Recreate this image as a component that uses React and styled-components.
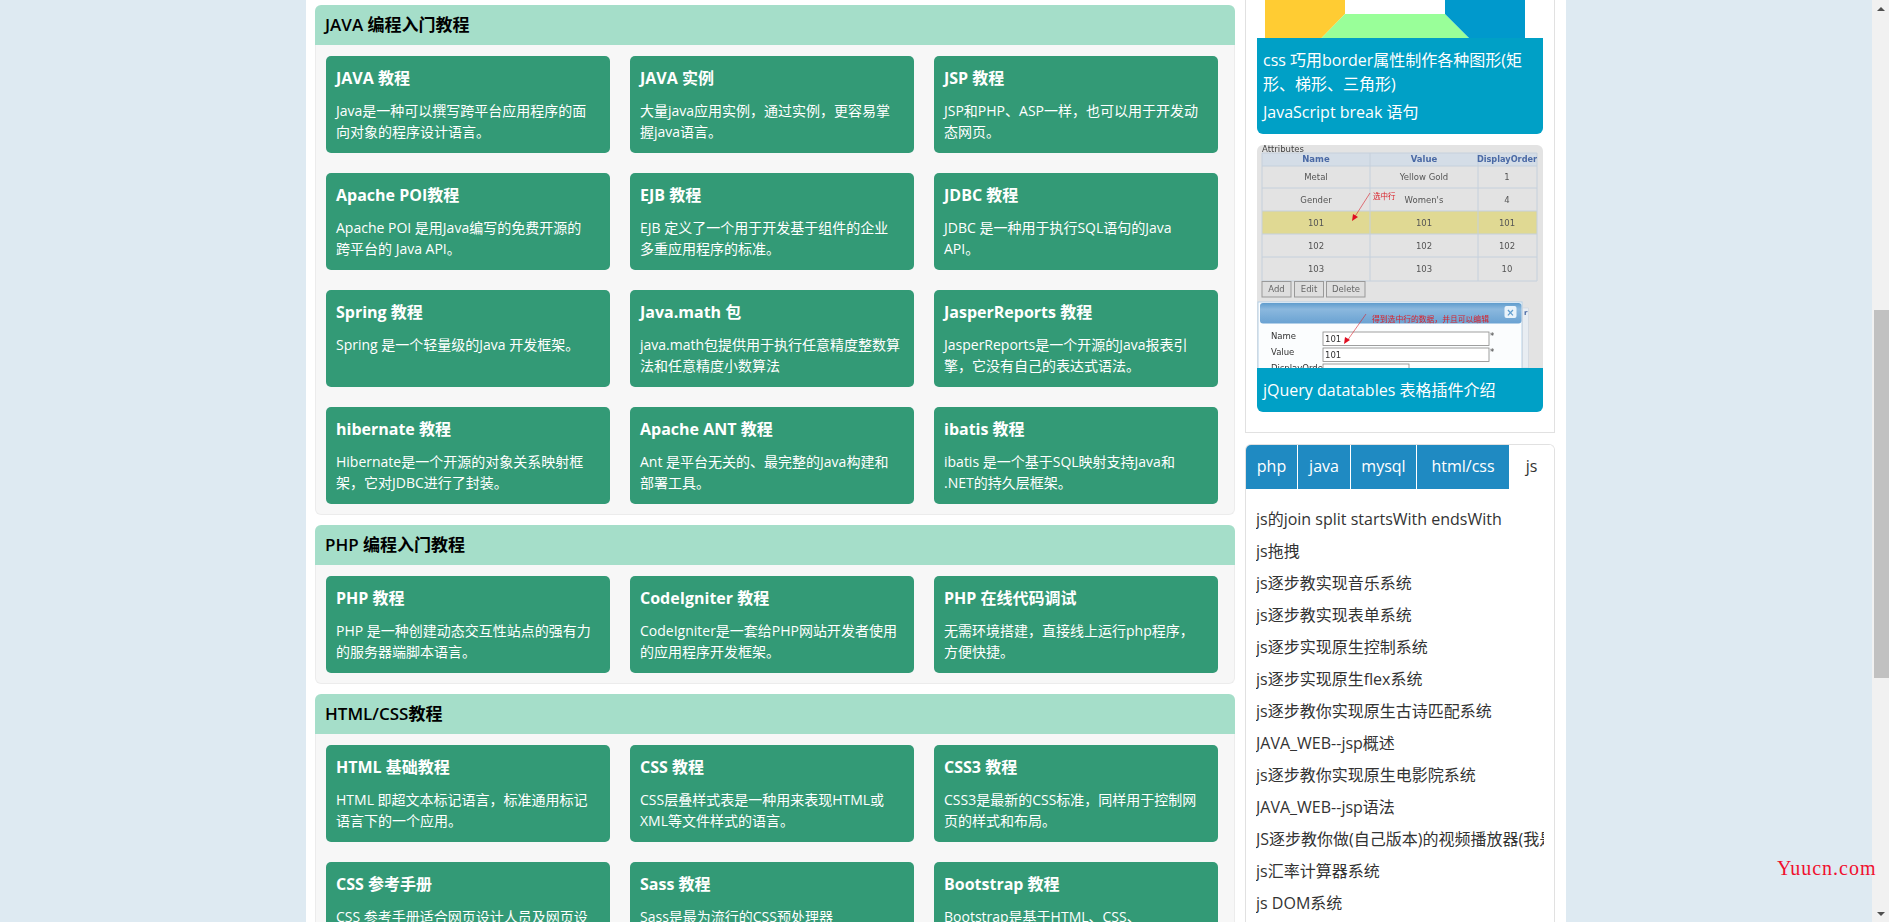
// App.jsx
import styled, { createGlobalStyle } from "styled-components";

const FONT = `"Open Sans", "Noto Sans CJK SC", sans-serif`;

// line breaks in the descriptions follow the original page
const sections = [
  {
    title: "JAVA 编程入门教程",
    cards: [
      ["JAVA 教程", "Java是一种可以撰写跨平台应用程序的面\n向对象的程序设计语言。"],
      ["JAVA 实例", "大量java应用实例，通过实例，更容易掌\n握java语言。"],
      ["JSP 教程", "JSP和PHP、ASP一样，也可以用于开发动\n态网页。"],
      ["Apache POI教程", "Apache POI 是用Java编写的免费开源的\n跨平台的 Java API。"],
      ["EJB 教程", "EJB 定义了一个用于开发基于组件的企业\n多重应用程序的标准。"],
      ["JDBC 教程", "JDBC 是一种用于执行SQL语句的Java\nAPI。"],
      ["Spring 教程", "Spring 是一个轻量级的Java 开发框架。"],
      ["Java.math 包", "java.math包提供用于执行任意精度整数算\n法和任意精度小数算法"],
      ["JasperReports 教程", "JasperReports是一个开源的Java报表引\n擎，它没有自己的表达式语法。"],
      ["hibernate 教程", "Hibernate是一个开源的对象关系映射框\n架，它对JDBC进行了封装。"],
      ["Apache ANT 教程", "Ant 是平台无关的、最完整的Java构建和\n部署工具。"],
      ["ibatis 教程", "ibatis 是一个基于SQL映射支持Java和\n.NET的持久层框架。"],
    ],
  },
  {
    title: "PHP 编程入门教程",
    cards: [
      ["PHP 教程", "PHP 是一种创建动态交互性站点的强有力\n的服务器端脚本语言。"],
      ["CodeIgniter 教程", "CodeIgniter是一套给PHP网站开发者使用\n的应用程序开发框架。"],
      ["PHP 在线代码调试", "无需环境搭建，直接线上运行php程序，\n方便快捷。"],
    ],
  },
  {
    title: "HTML/CSS教程",
    cards: [
      ["HTML 基础教程", "HTML 即超文本标记语言，标准通用标记\n语言下的一个应用。"],
      ["CSS 教程", "CSS层叠样式表是一种用来表现HTML或\nXML等文件样式的语言。"],
      ["CSS3 教程", "CSS3是最新的CSS标准，同样用于控制网\n页的样式和布局。"],
      ["CSS 参考手册", "CSS 参考手册适合网页设计人员及网页设\n计爱好者使用。"],
      ["Sass 教程", "Sass是最为流行的CSS预处理器"],
      ["Bootstrap 教程", "Bootstrap是基于HTML、CSS、\nJavaScript的前端框架。"],
    ],
  },
];

const tabs = [
  { label: "php", width: 52 },
  { label: "java", width: 53 },
  { label: "mysql", width: 66 },
  { label: "html/css", width: 92 },
  { label: "js", width: 45, active: true },
];

const jsLinks = [
  "js的join split startsWith endsWith",
  "js拖拽",
  "js逐步教实现音乐系统",
  "js逐步教实现表单系统",
  "js逐步实现原生控制系统",
  "js逐步实现原生flex系统",
  "js逐步教你实现原生古诗匹配系统",
  "JAVA_WEB--jsp概述",
  "js逐步教你实现原生电影院系统",
  "JAVA_WEB--jsp语法",
  "JS逐步教你做(自己版本)的视频播放器(我是菜鸟系列)",
  "js汇率计算器系统",
  "js DOM系统",
];

const GlobalStyle = createGlobalStyle`
  html, body {
    margin: 0;
    height: 100%;
    overflow: hidden;
    font-family: ${FONT};
  }
`;

const Page = styled.div`
  display: flex;
  height: 100vh;
  background: #deeaf2;
  position: relative;
`;

const Viewport = styled.div`
  flex: 1;
  overflow: hidden;
`;

const Wrapper = styled.div`
  width: 1260px;
  height: 100%;
  box-sizing: border-box;
  margin: 0 auto;
  background: #fff;
  padding-left: 9px;
  display: flex;
  gap: 10px;
`;

const Main = styled.main`
  width: 920px;
  flex: none;
  padding-top: 5px;
  display: flex;
  flex-direction: column;
  gap: 10px;
`;

const SectionHead = styled.h2`
  margin: 0;
  height: 40px;
  line-height: 40px;
  padding-left: 10px;
  font-size: 17px;
  font-weight: 600;
  color: #000;
  background: #a5dec9;
  border-radius: 6px 6px 0 0;
`;

const SectionBody = styled.div`
  display: grid;
  grid-template-columns: repeat(3, 284px);
  gap: 20px;
  padding: 11px 10px 10px;
  background: #f7f7f7;
  border: 1px solid #ececec;
  border-top: 0;
  border-radius: 0 0 6px 6px;
`;

const Card = styled.a`
  display: block;
  height: 97px;
  box-sizing: border-box;
  padding: 10px;
  background: #339a76;
  border-radius: 5px;
  color: #fff;
`;

const CardTitle = styled.h4`
  margin: 0 0 10px;
  font-size: 16px;
  line-height: 24px;
  font-weight: 700;
`;

const CardText = styled.p`
  margin: 0;
  font-size: 14px;
  line-height: 21px;
  white-space: pre;
`;

const Sidebar = styled.aside`
  width: 310px;
  flex: none;
  display: flex;
  flex-direction: column;
  gap: 11px;
`;

const PicturePanel = styled.div`
  height: 433px;
  box-sizing: border-box;
  border: 1px solid #e1e1e1;
  border-top: 0;
  padding: 0 11px;
  display: flex;
  flex-direction: column;
  gap: 11px;
`;

const PictureCard = styled.div`
  overflow: hidden;
  border-radius: ${({ $open }) => ($open ? "0 0 6px 6px" : "6px")};
`;

const Picture = styled.svg`
  display: block;
  width: 286px;
`;

const Caption = styled.div`
  background: #00a0c6;
  padding: 10px 6px;
  display: flex;
  flex-direction: column;
  gap: 4px;
  color: #fff;
  font-size: 16px;
  line-height: 24px;
`;

const TabPanel = styled.div`
  flex: 1;
  border: 1px solid #e1e1e1;
  border-bottom: 0;
  border-radius: 6px 6px 0 0;
  overflow: hidden;
`;

const TabRow = styled.div`
  display: flex;
  height: 44px;
`;

const Tab = styled.div`
  box-sizing: border-box;
  width: ${({ $w }) => $w}px;
  line-height: 43px;
  text-align: center;
  font-size: 16px;
  color: ${({ $active }) => ($active ? "#333" : "#fff")};
  background: ${({ $active }) => ($active ? "#fff" : "#1f8ac2")};
  border-right: ${({ $active, $last }) => ($active || $last ? "0" : "1px solid #fff")};
`;

const LinkList = styled.ul`
  list-style: none;
  margin: 0;
  padding: 14px 10px 0;
`;

const LinkItem = styled.li`
  height: 32px;
  line-height: 32px;
  font-size: 16px;
  color: #333;
  white-space: nowrap;
  overflow: hidden;
`;

const Scrollbar = styled.div`
  width: 17px;
  flex: none;
  background: #f1f1f1;
  display: flex;
  flex-direction: column;
  align-items: center;
`;

const ArrowBox = styled.div`
  height: 17px;
  flex: none;
  display: flex;
  align-items: center;
  justify-content: center;
`;

const Arrow = styled.span`
  width: 0;
  height: 0;
  border-left: 4px solid transparent;
  border-right: 4px solid transparent;
  ${({ $down }) =>
    $down ? "border-top: 4px solid #505050;" : "border-bottom: 4px solid #505050;"}
`;

const Track = styled.div`
  flex: 1;
  width: 100%;
  padding-top: 293px;
`;

const Thumb = styled.div`
  width: 15px;
  height: 368px;
  margin-left: 2px;
  background: #c1c1c1;
`;

const Watermark = styled.div`
  position: absolute;
  left: 1777px;
  top: 856px;
  font-family: "Liberation Serif", serif;
  font-size: 20px;
  line-height: 24px;
  letter-spacing: 1px;
  color: #f0102e;
`;

function BorderShapes() {
  return (
    <Picture viewBox="0 0 286 38" height="38">
      <rect width="286" height="38" fill="#fff" />
      <polygon points="8,0 88,0 88,14 64.500,38 8,38" fill="#ffcc33" />
      <polygon points="88,14 188,14 212,38 64.500,38" fill="#99ff99" />
      <polygon points="188,0 268,0 268,38 212,38 188,14" fill="#0099cc" />
    </Picture>
  );
}

const rowLines = [21, 43, 66, 89, 112, 136];
const colLines = [5, 113, 221, 280];
const tableRows = [
  ["Metal", "Yellow Gold", "1", 33],
  ["Gender", "Women's", "4", 56],
  ["101", "101", "101", 79],
  ["102", "102", "102", 102],
  ["103", "103", "10", 125],
];

function DatatableShot() {
  return (
    <Picture viewBox="0 0 286 223" height="223" fontFamily="'DejaVu Sans', sans-serif">
      <defs>
        <filter id="soft">
          <feGaussianBlur stdDeviation="0.35" />
        </filter>
        <linearGradient id="titlebar" x1="0" y1="0" x2="0" y2="1">
          <stop offset="0" stopColor="#5f9ccd" />
          <stop offset="0.3" stopColor="#8bb8de" />
          <stop offset="1" stopColor="#6aa2d2" />
        </linearGradient>
      </defs>
      <rect width="286" height="223" fill="#e3e3e3" />
      <g filter="url(#soft)">
        <text x="5" y="7" fontSize="8.500" fill="#444">Attributes</text>
        <rect x="5" y="8" width="275" height="13" fill="#d4dde7" />
        <rect x="5" y="66" width="275" height="23" fill="#e0d993" />
        {rowLines.map((y) => (
          <line key={y} x1="5" x2="280" y1={y} y2={y} stroke="#c5d0dc" />
        ))}
        <line x1="5" x2="280" y1="8" y2="8" stroke="#c5d0dc" />
        {colLines.map((x) => (
          <line key={x} x1={x} x2={x} y1="8" y2="136" stroke="#c5d0dc" />
        ))}
        <g fontSize="8.500" fontWeight="700" fill="#4a69a5" textAnchor="middle">
          <text x="59" y="17">Name</text>
          <text x="167" y="17">Value</text>
          <text x="250" y="17" fontSize="8.200">DisplayOrder</text>
        </g>
        <g fontSize="8.500" fill="#555" textAnchor="middle">
          {tableRows.map(([a, b, c, y]) => (
            <g key={y}>
              <text x="59" y={y + 2}>{a}</text>
              <text x="167" y={y + 2}>{b}</text>
              <text x="250" y={y + 2}>{c}</text>
            </g>
          ))}
        </g>
        <g fill="#dedede" stroke="#999">
          <rect x="5" y="136.500" width="29" height="15.500" />
          <rect x="37.500" y="136.500" width="29" height="15.500" />
          <rect x="69.500" y="136.500" width="38.500" height="15.500" />
        </g>
        <g fontSize="8.500" fill="#666" textAnchor="middle">
          <text x="19.500" y="147">Add</text>
          <text x="52" y="147">Edit</text>
          <text x="89" y="147">Delete</text>
        </g>
        <rect x="1" y="157" width="264" height="70" fill="#fbfdfe" stroke="#b5d0e6" />
        <rect x="265.500" y="163" width="6" height="60" fill="#e8edf2" stroke="#c5d0dc" strokeWidth="0.500" />
        <text x="267" y="170" fontSize="7" fontWeight="700" fill="#4a69a5">r</text>
        <rect x="3" y="158" width="261.500" height="20.500" rx="3" fill="url(#titlebar)" />
        <rect x="247.500" y="161" width="12" height="12" rx="2" fill="#eaf3fa" />
        <text x="253.500" y="170.500" fontSize="10" fontWeight="700" fill="#5f9ccd" textAnchor="middle">×</text>
        <g fontSize="8.500" fill="#333">
          <text x="14" y="194">Name</text>
          <text x="14" y="210">Value</text>
          <text x="14" y="226">DisplayOrder</text>
        </g>
        <g fill="#fff" stroke="#888" strokeWidth="0.800">
          <rect x="66" y="187" width="166" height="13.500" />
          <rect x="66" y="203" width="166" height="13.500" />
          <rect x="66" y="219" width="86" height="13.500" />
        </g>
        <g fontSize="8.500" fill="#333">
          <text x="68" y="197">101</text>
          <text x="68" y="213">101</text>
          <text x="233" y="194">*</text>
          <text x="233" y="210">*</text>
        </g>
        <g stroke="#d9202a" strokeWidth="0.600" fill="none">
          <line x1="113" y1="48" x2="97" y2="73" />
          <line x1="109" y1="169" x2="90" y2="196" />
        </g>
        <polygon points="95,76 96,69 101,72" fill="#e01020" />
        <polygon points="87,199 88,192 93,195" fill="#e01020" />
        <g fill="#d9202a" fontFamily="'Noto Sans CJK SC', sans-serif">
          <text x="116" y="54" fontSize="7.500">选中行</text>
          <text x="115" y="177" fontSize="7.800">得到选中行的数据，并且可以编辑</text>
        </g>
      </g>
    </Picture>
  );
}

export default function App() {
  return (
    <Page>
      <GlobalStyle />
      <Viewport>
        <Wrapper>
          <Main>
            {sections.map((section) => (
              <section key={section.title}>
                <SectionHead>{section.title}</SectionHead>
                <SectionBody>
                  {section.cards.map(([title, text]) => (
                    <Card key={title}>
                      <CardTitle>{title}</CardTitle>
                      <CardText>{text}</CardText>
                    </Card>
                  ))}
                </SectionBody>
              </section>
            ))}
          </Main>
          <Sidebar>
            <PicturePanel>
              <PictureCard $open>
                <BorderShapes />
                <Caption>
                  <div>css 巧用border属性制作各种图形(矩形、梯形、三角形)</div>
                  <div>JavaScript break 语句</div>
                </Caption>
              </PictureCard>
              <PictureCard>
                <DatatableShot />
                <Caption>
                  <div>jQuery datatables 表格插件介绍</div>
                </Caption>
              </PictureCard>
            </PicturePanel>
            <TabPanel>
              <TabRow>
                {tabs.map((tab) => (
                  <Tab key={tab.label} $w={tab.width} $active={tab.active} $last={tab.label === "html/css"}>
                    {tab.label}
                  </Tab>
                ))}
              </TabRow>
              <LinkList>
                {jsLinks.map((item) => (
                  <LinkItem key={item}>{item}</LinkItem>
                ))}
              </LinkList>
            </TabPanel>
          </Sidebar>
        </Wrapper>
      </Viewport>
      <Scrollbar>
        <ArrowBox>
          <Arrow />
        </ArrowBox>
        <Track>
          <Thumb />
        </Track>
        <ArrowBox>
          <Arrow $down />
        </ArrowBox>
      </Scrollbar>
      <Watermark>Yuucn.com</Watermark>
    </Page>
  );
}
